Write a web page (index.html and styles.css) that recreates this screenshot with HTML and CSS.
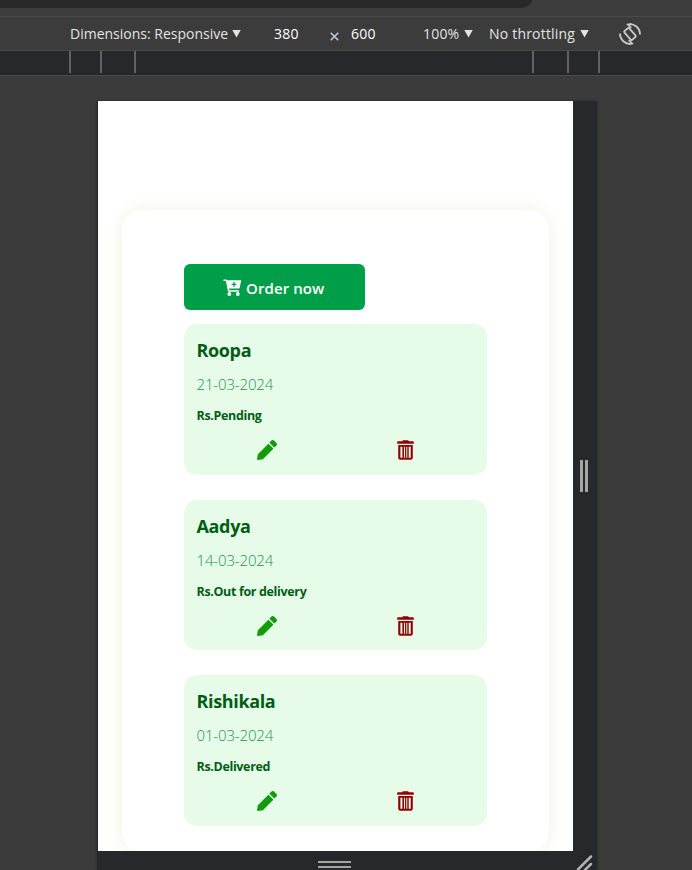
FILE: index.html
```
<!DOCTYPE html>
<html lang="en">
<head>
<meta charset="utf-8">
<title>Orders</title>
<link rel="stylesheet" href="styles.css">
</head>
<body>
<svg class="defs" width="0" height="0" aria-hidden="true">
  <symbol id="pencil" viewBox="0 0 512 512"><path d="M498 142l-46 46c-5 5-13 5-17 0L324 77c-5-5-5-12 0-17l46-46c19-19 49-19 68 0l60 60c19 19 19 49 0 68zm-214-42L22 362 0 484c-3 16 12 30 28 28l122-22 262-262c5-5 5-13 0-17L301 100c-4-5-12-5-17 0z"/></symbol>
  <symbol id="trash" viewBox="0 0 17 20"><path fill-rule="evenodd" d="M5 1.300 6 .2h5l1 1.100h4c.5 0 .8.3.8.8v1.700H.2V2.100c0-.5.3-.8.8-.8zM1.200 5h14.600v12.800c0 1-.8 1.900-1.900 1.900H3.100c-1.100 0-1.900-.9-1.900-1.900zM3.400 6.800V17.700h2V6.800zm3.600 0V17.700h1V6.800zm2.300 0V17.700h1V6.800zm2.400 0V17.700h2V6.800z"/></symbol>
  <symbol id="cart" viewBox="0 0 18 17"><path fill-rule="evenodd" d="M0 .5h2.700c.5 0 .8.3.9.8h14.100l-1.500 7.500c-.1.5-.5.8-1 .8H5.600l.3 1.700h9.600v1.500H5.300c-.5 0-.8-.3-.9-.7L2.400 2H0zM9.900 3v1.700H8.200v1.300h1.700v1.700h1.300V6h1.700V4.700h-1.700V3z"/><circle cx="5.800" cy="15" r="1.900"/><circle cx="14.300" cy="15" r="1.900"/></symbol>
</svg>
<div class="window">
  <div class="tabstrip"><div class="tab"></div></div>
  <header class="toolbar">
    <span class="dimensions">Dimensions: Responsive</span><i class="arrow"></i>
    <span class="width">380</span>
    <svg class="times" viewBox="0 0 9 9"><path d="M.7.7l7.600 7.600M8.300.7L.7 8.300"/></svg>
    <span class="height">600</span>
    <span class="zoom">100%</span><i class="arrow"></i>
    <span class="throttle">No throttling</span><i class="arrow"></i>
    <svg class="rotate" viewBox="0 0 22 22"><g fill="none" stroke="#c7c7c7" stroke-width="1.900"><rect x="7.800" y="5.200" width="6.400" height="11.600" rx="1.200" transform="rotate(-42 11 11)"/><path d="M8.500 1.500C15.500-.2 21 5 21 11.500M13.500 20.500C6.500 22.200 1 17 1 10.500M12.500.8l-3.500.8 3.200 3.200M9.500 21.200l3.500-.8-3.200-3.200"/></g></svg>
  </header>
  <div class="ruler"><i></i><i></i><i></i><i></i><i></i><i></i></div>
  <main class="stage">
    <div class="device">
      <div class="viewport">
        <section class="panel">
          <button class="order"><svg><use href="#cart"/></svg><span>Order now</span></button>
          <article class="card">
            <h2 class="roopa">Roopa</h2><p class="date">21-03-2024</p><p class="status pending">Rs.Pending</p>
            <div class="actions"><svg class="edit"><use href="#pencil"/></svg><svg class="delete"><use href="#trash"/></svg></div>
          </article>
          <article class="card">
            <h2 class="aadya">Aadya</h2><p class="date">14-03-2024</p><p class="status out">Rs.Out for delivery</p>
            <div class="actions"><svg class="edit"><use href="#pencil"/></svg><svg class="delete"><use href="#trash"/></svg></div>
          </article>
          <article class="card">
            <h2 class="rishikala">Rishikala</h2><p class="date">01-03-2024</p><p class="status delivered">Rs.Delivered</p>
            <div class="actions"><svg class="edit"><use href="#pencil"/></svg><svg class="delete"><use href="#trash"/></svg></div>
          </article>
        </section>
      </div>
      <div class="handle-right"><i></i><i></i></div>
      <div class="handle-bottom"><i></i><i></i></div>
      <div class="handle-corner"><svg viewBox="0 0 24 19"><path d="M5 18.500L18 5.500M12 19l6-6"/></svg></div>
    </div>
  </main>
</div>
</body>
</html>
```
FILE: styles.css
```
* { box-sizing: border-box; }
body { margin: 0; background: #3b3b3b; font-family: "Open Sans", "Noto Sans", sans-serif; overflow: hidden; }
svg { display: block; flex: none; }
.defs { position: absolute; }
.window { width: 692px; height: 870px; overflow: hidden; display: flex; flex-direction: column; }
.tabstrip { height: 17px; flex: none; background: #3c3c3c; border-bottom: 1px solid #4a4a4a; }
.tab { width: 532px; height: 8px; background: #282828; border-bottom-right-radius: 16px 10px; }
.toolbar { height: 34px; flex: none; background: #3c3c3c; border-bottom: 1px solid #4a4a4a; display: flex; align-items: center; padding-left: 70px; color: #e3e3e3; font-size: 14px; line-height: 20px; white-space: nowrap; }
.toolbar span { flex: none; }
.dimensions { width: 162px; letter-spacing: 0; }
.arrow { width: 9px; height: 8px; flex: none; background: #e3e3e3; clip-path: polygon(0 0, 100% 0, 50% 100%); }
.width { width: 56px; margin-left: 33px; color: #fff; letter-spacing: .2px; }
.times { width: 9px; height: 9px; margin-top: 6px; stroke: #c3cbe0; stroke-width: 1.500; }
.height { width: 72px; margin-left: 12px; color: #fff; letter-spacing: .2px; }
.zoom { width: 41px; letter-spacing: .2px; }
.throttle { width: 91px; margin-left: 16px; letter-spacing: .2px; }
.rotate { width: 22px; height: 22px; margin-left: 30px; }
.ruler { height: 25px; flex: none; background: #27282c; border-bottom: 1px solid #494949; display: grid; grid-template-columns: 31px 34px 398px 35px 31px 2px; padding-left: 69px; }
.ruler i { width: 2px; height: 22px; background: #626262; }
.stage { flex: 1; padding: 25px 0 0 97px; }
.device { width: 500px; height: 769px; display: grid; grid-template-columns: 476px 24px; grid-template-rows: 750px 19px; background: #27282c; box-shadow: 0 0 2px #252525; }
.viewport { background: #fff; margin-left: 1px; padding: 109px 24px 0; overflow: hidden; }
.panel { height: 642px; border-radius: 20px; background: #fff; box-shadow: 0 0 20px #f2f2df; padding: 54px 62px 0 61.500px; }
.order { width: 181.500px; height: 46px; padding: 0 1px 0 0; border: 0; border-radius: 6px; background: #009e49; color: #fff; fill: #fff; display: flex; align-items: center; justify-content: center; gap: 4px; margin: 0 0 14px; font: 600 15px/22px "Open Sans", sans-serif; letter-spacing: .08px; }
.order svg { width: 19px; height: 17px; }
.order span { padding-top: 1px; }
.card { height: 150.500px; margin-bottom: 25px; border-radius: 13px; background: #e6fce9; padding: 13px 13px; color: #005c14; }
.card h2 { margin: 0; font-size: 18px; line-height: 26px; font-weight: 700; letter-spacing: -.35px; }
.date { margin: 10px 0 0; color: #239447; font-size: 15px; line-height: 22px; font-weight: 300; letter-spacing: -.15px; }
.status { margin: 11px 0 0; font-size: 12.500px; line-height: 19px; font-weight: 700; letter-spacing: -.35px; }
.actions { display: flex; padding: 15px 0 0 60px; }
.edit { width: 20px; height: 20px; fill: #149b0b; }
.delete { width: 17px; height: 20px; margin-left: 120px; fill: #920000; }
.handle-right, .handle-bottom { display: flex; align-items: center; justify-content: center; gap: 3px; }
.handle-right { gap: 2px; padding-right: 2px; }
.handle-right i { width: 3px; height: 32px; background: #a3a5a5; }
.handle-bottom { flex-direction: column; padding: 7px 2px 0 0; }
.handle-bottom i { width: 33px; height: 2px; background: #a3a5a5; }
.handle-corner svg { width: 24px; height: 19px; stroke: #b1b3b3; stroke-width: 2.500; stroke-linecap: round; }
```
